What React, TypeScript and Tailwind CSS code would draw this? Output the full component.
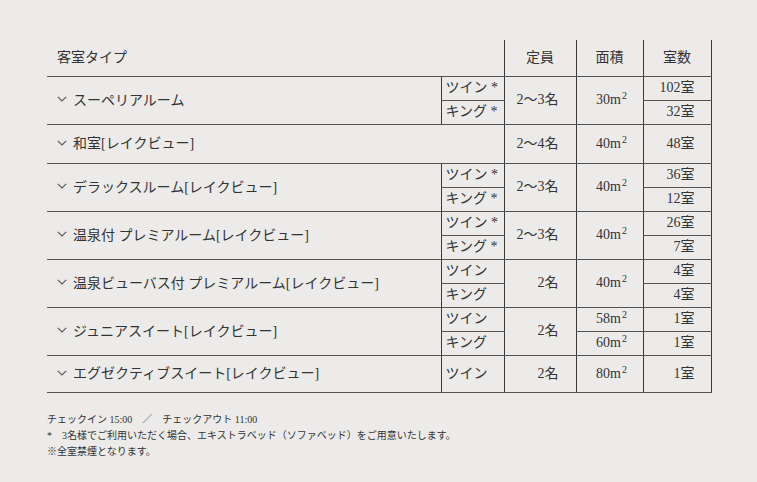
import React from "react";

const dl = "border-l border-dotted border-l-[#3a3a3a]";
const dr = "border-r border-dotted border-r-[#3a3a3a]";
const bb = "border-b border-solid border-b-[#555]";

function Chevron() {
  return (
    <svg width="10" height="6" viewBox="0 0 10 6" className="inline-block mr-[6px] align-middle relative top-[-1px]">
      <path d="M0.8 0.8 L5 5 L9.2 0.8" fill="none" stroke="#555" strokeWidth="1.1" />
    </svg>
  );
}

function M({ v }: { v: string }) {
  return (
    <span>
      {v}m<sup className="text-[10px] ml-[1px]">2</sup>
    </span>
  );
}

type Room = {
  name: string;
  beds?: string[];
  cap: string;
  area: string | string[];
  count: string | string[];
};

const rooms: Room[] = [
  { name: "スーペリアルーム", beds: ["ツイン *", "キング *"], cap: "2〜3名", area: "30", count: ["102室", "32室"] },
  { name: "和室[レイクビュー]", cap: "2〜4名", area: "40", count: "48室" },
  { name: "デラックスルーム[レイクビュー]", beds: ["ツイン *", "キング *"], cap: "2〜3名", area: "40", count: ["36室", "12室"] },
  { name: "温泉付 プレミアルーム[レイクビュー]", beds: ["ツイン *", "キング *"], cap: "2〜3名", area: "40", count: ["26室", "7室"] },
  { name: "温泉ビューバス付 プレミアルーム[レイクビュー]", beds: ["ツイン", "キング"], cap: "2名", area: "40", count: ["4室", "4室"] },
  { name: "ジュニアスイート[レイクビュー]", beds: ["ツイン", "キング"], cap: "2名", area: ["58", "60"], count: ["1室", "1室"] },
  { name: "エグゼクティブスイート[レイクビュー]", beds: ["ツイン"], cap: "2名", area: "80", count: "1室" },
];

export default function App() {
  return (
    <div className="min-h-[482px] w-[757px] bg-[#ecebe9] text-[#333] font-['Liberation_Serif','Noto_Sans_CJK_JP',serif] pt-[40px]">
      <table className="ml-[47px] w-[664px] table-fixed border-collapse text-[14px] leading-none">
        <colgroup>
          <col className="w-[394px]" />
          <col className="w-[63px]" />
          <col className="w-[72px]" />
          <col className="w-[67px]" />
          <col className="w-[68px]" />
        </colgroup>
        <thead>
          <tr className="h-[36px]">
            <th colSpan={2} className={`text-left font-normal pl-[10px] ${bb}`}>客室タイプ</th>
            <th className={`font-normal ${dl} ${bb}`}>定員</th>
            <th className={`font-normal ${dl} ${bb}`}>面積</th>
            <th className={`font-normal ${dl} ${dr} ${bb}`}>室数</th>
          </tr>
        </thead>
        <tbody>
          {rooms.map((r, i) => {
            const nameCell = (span: number, colSpan = 1) => (
              <td rowSpan={span} colSpan={colSpan} className={`pl-[10px] ${bb}`}>
                <Chevron />
                <span className="align-middle">{r.name}</span>
              </td>
            );
            const capCell = (span: number) => (
              <td rowSpan={span} className={`text-right pr-[17px] ${dl} ${bb}`}>{r.cap}</td>
            );
            if (!r.beds) {
              return (
                <tr key={i} className="h-[39px]">
                  {nameCell(1, 2)}
                  {capCell(1)}
                  <td className={`text-center pl-[4px] ${dl} ${bb}`}><M v={r.area as string} /></td>
                  <td className={`text-right pr-[16px] ${dl} ${dr} ${bb}`}>{r.count as string}</td>
                </tr>
              );
            }
            if (r.beds.length === 1) {
              return (
                <tr key={i} className="h-[37px]">
                  {nameCell(1)}
                  <td className={`pl-[4px] ${dl} ${bb}`}>{r.beds[0]}</td>
                  {capCell(1)}
                  <td className={`text-center pl-[4px] ${dl} ${bb}`}><M v={r.area as string} /></td>
                  <td className={`text-right pr-[16px] ${dl} ${dr} ${bb}`}>{r.count as string}</td>
                </tr>
              );
            }
            const areas = r.area;
            const counts = r.count as string[];
            return (
              <React.Fragment key={i}>
                <tr className="h-[24px]">
                  {nameCell(2)}
                  <td className={`pl-[4px] ${dl} ${bb}`}>{r.beds[0]}</td>
                  {capCell(2)}
                  {Array.isArray(areas) ? (
                    <td className={`text-center pl-[4px] ${dl} ${bb}`}><M v={areas[0]} /></td>
                  ) : (
                    <td rowSpan={2} className={`text-center pl-[4px] ${dl} ${bb}`}><M v={areas} /></td>
                  )}
                  <td className={`text-right pr-[16px] ${dl} ${dr} ${bb}`}>{counts[0]}</td>
                </tr>
                <tr className="h-[24px]">
                  <td className={`pl-[4px] ${dl} ${bb}`}>{r.beds[1]}</td>
                  {Array.isArray(areas) && (
                    <td className={`text-center pl-[4px] ${dl} ${bb}`}><M v={areas[1]} /></td>
                  )}
                  <td className={`text-right pr-[16px] ${dl} ${dr} ${bb}`}>{counts[1]}</td>
                </tr>
              </React.Fragment>
            );
          })}
        </tbody>
      </table>
      <div className="ml-[47px] mt-[19px] text-[10px] leading-[16px] text-[#333]">
        <p>チェックイン 15:00　／　チェックアウト 11:00</p>
        <p>*　3名様でご利用いただく場合、エキストラベッド（ソファベッド）をご用意いたします。</p>
        <p>※全室禁煙となります。</p>
      </div>
    </div>
  );
}
